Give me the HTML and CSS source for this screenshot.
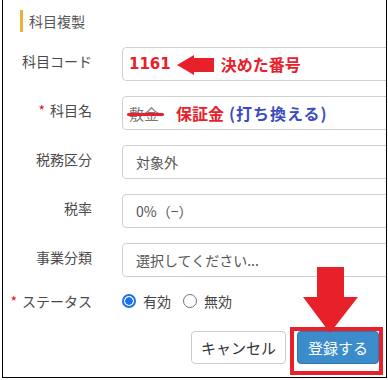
FILE: index.html
```html
<!DOCTYPE html>
<html lang="ja">
<head>
    <meta charset="UTF-8">
    <title>科目複製</title>
    <link rel="stylesheet" href="styles.css">
</head>
<body>
    <div class="frame">
        <div class="title">科目複製</div>

        <div class="form">
            <label class="label">科目コード</label>
            <div class="input note">
                <span class="code">1161</span>
                <svg class="left-arrow" width="37" height="20" viewBox="0 0 37 20">
                    <polygon points="0,10 17,0 17,3 37,3 37,17 17,17 17,20" fill="#e8202a"/>
                </svg>
                <span class="red">決めた番号</span>
            </div>

            <label class="label"><span class="req">*</span>科目名</label>
            <div class="input note">
                <span class="old">敷金</span>
                <span class="red">保証金</span>
                <span class="blue">(打ち換える)</span>
            </div>

            <label class="label">税務区分</label>
            <div class="input">対象外</div>

            <label class="label">税率</label>
            <div class="input">0%（−）</div>

            <label class="label">事業分類</label>
            <div class="input">選択してください...</div>

            <label class="label status-label"><span class="req">*</span>ステータス</label>
            <div class="radios">
                <span class="radio checked"></span>有効
                <span class="radio"></span>無効
            </div>
        </div>

        <div class="buttons">
            <button class="btn cancel">キャンセル</button>
            <button class="btn submit">登録する</button>
        </div>

        <!-- annotations drawn on top of the form -->
        <div class="red-box"></div>
        <svg class="down-arrow" width="55" height="66" viewBox="0 0 55 66">
            <polygon points="14,0 41,0 41,30 55,30 27,66 0,30 14,30" fill="#e8202a"/>
        </svg>
    </div>
</body>
</html>
```

FILE: styles.css
```css
body {
    margin: 0;
    background: #fff;
    font-family: "Noto Sans CJK JP", "DejaVu Sans", sans-serif;
    color: #555;
}

.frame {
    position: relative;
    margin-left: 2px;
    width: 383px;
    height: 377px;
    border-left: 1px solid #000;
    border-right: 1px solid #000;
    border-bottom: 1px solid #000;
    overflow: hidden;
}

.title {
    margin: 10px 0 0 17px;
    height: 22px;
    line-height: 22px;
    padding-left: 6px;
    border-left: 3px solid #e6b632;
    font-size: 14px;
    color: #555;
}

.form {
    display: grid;
    grid-template-columns: 89px 340px;
    column-gap: 30px;
    row-gap: 15px;
    margin-top: 15px;
}

.label {
    text-align: right;
    font-size: 14px;
    line-height: 28px;
    color: #4a4a4a;
}

.req {
    color: #e01020;
    margin-right: 5px;
}

.input {
    height: 32px;
    border: 1px solid #d0d0d0;
    border-radius: 4px;
    padding-left: 13px;
    display: flex;
    align-items: center;
    font-size: 14px;
    color: #555;
}

.input.note {
    padding-left: 6px;
}

.code {
    font-family: "DejaVu Sans", sans-serif;
    font-weight: bold;
    font-size: 15px;
    color: #e8202a;
}

.left-arrow {
    margin: 1px 7px 0 6px;
}

.red {
    font-weight: bold;
    font-size: 16px;
    color: #e8202a;
}

.blue {
    font-weight: bold;
    font-size: 16px;
    color: #3b4cc0;
    margin-left: 5px;
    letter-spacing: 1px;
}

.old {
    position: relative;
    color: #777;
    font-size: 15px;
    margin-right: 17px;
}

.old::after {
    content: "";
    position: absolute;
    left: -2px;
    right: -5px;
    top: 10px;
    height: 3px;
    background: #e8202a;
    border-radius: 2px;
}

.status-label {
    line-height: 26px;
    margin-top: -4px;
}

.radios {
    height: 26px;
    margin-top: -4px;
    display: flex;
    align-items: center;
    font-size: 14px;
    color: #444;
}

.radio {
    width: 12px;
    height: 12px;
    border: 1px solid #767676;
    border-radius: 50%;
    margin: 0 7px 0 12px;
    box-sizing: content-box;
}

.radio.checked {
    border: 2px solid #1a73e8;
    width: 10px;
    height: 10px;
    background: radial-gradient(circle, #1a73e8 0 3.5px, #fff 4px);
    margin-left: 0;
}

.buttons {
    display: flex;
    justify-content: flex-end;
    gap: 11px;
    margin: 17px 7px 0 0;
}

.btn {
    height: 33px;
    border-radius: 4px;
    font-family: "Noto Sans CJK JP", sans-serif;
    font-size: 15px;
    padding: 0;
}

.cancel {
    width: 95px;
    background: #fff;
    border: 1px solid #ccc;
    color: #333;
}

.submit {
    width: 82px;
    background: #3a8ccb;
    border: 1px solid #2f78b4;
    color: #fff;
}

.red-box {
    position: absolute;
    left: 287px;
    top: 327px;
    width: 85px;
    height: 40px;
    border: 4px solid #e8202a;
}

.down-arrow {
    position: absolute;
    left: 300px;
    top: 267px;
}
```
